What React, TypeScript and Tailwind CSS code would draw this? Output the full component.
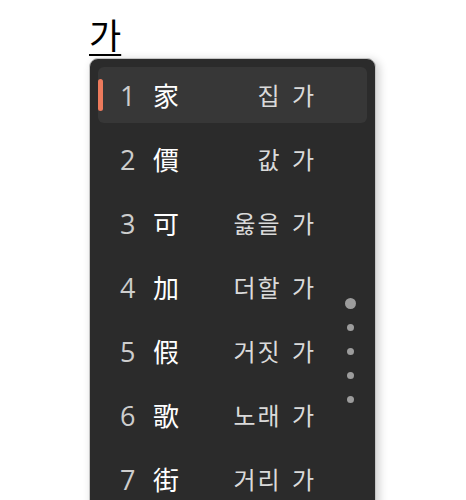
const rows = [
  { n: 1, hanja: "家", meaning: "집 가" },
  { n: 2, hanja: "價", meaning: "값 가" },
  { n: 3, hanja: "可", meaning: "옳을 가" },
  { n: 4, hanja: "加", meaning: "더할 가" },
  { n: 5, hanja: "假", meaning: "거짓 가" },
  { n: 6, hanja: "歌", meaning: "노래 가" },
  { n: 7, hanja: "街", meaning: "거리 가" },
];

const font = { fontFamily: '"Noto Sans CJK KR", "Noto Sans", sans-serif' };

export default function App() {
  return (
    <div className="h-[500px] w-[466px] overflow-hidden bg-white pl-[89px]" style={font}>
      <div className="pt-[14px] text-[35px] leading-[40px] text-black underline underline-offset-[5px] decoration-[2px]">
        가
      </div>
      <div className="relative mt-[4px] w-[287px] rounded-[9px] border border-[#c4c4c4] bg-[#2b2b2b] p-2 shadow-[3px_2px_10px_rgba(0,0,0,0.2)]">
        <div className="flex flex-col gap-2">
          {rows.map((r, i) => (
            <div
              key={r.n}
              className={`relative flex h-14 items-center rounded-[6px] pl-[22px] pr-[51px] ${
                i === 0 ? "bg-[#373737]" : ""
              }`}
            >
              {i === 0 && (
                <span className="absolute left-0 top-[12px] h-[32px] w-[5px] rounded-full bg-[#ec7a5c]" />
              )}
              <span
                className="w-[33px] text-[27px] leading-none text-[#cdcdcd]"
                style={{ fontFamily: '"Open Sans", "Noto Sans", sans-serif' }}
              >
                {r.n}
              </span>
              <span className="text-[26px] leading-none text-white">{r.hanja}</span>
              <span className="flex-1 text-right text-[24px] leading-none tracking-[2px] [word-spacing:3px] text-[#dadada]">
                {r.meaning}
              </span>
            </div>
          ))}
        </div>
        <div className="absolute left-[255px] top-[239px] flex w-[10px] flex-col items-center gap-[17px]">
          <span className="-mb-[2px] h-[11px] w-[11px] rounded-full bg-[#9c9c9c]" />
          <span className="h-[7px] w-[7px] rounded-full bg-[#9c9c9c]" />
          <span className="h-[7px] w-[7px] rounded-full bg-[#9c9c9c]" />
          <span className="h-[7px] w-[7px] rounded-full bg-[#9c9c9c]" />
          <span className="h-[7px] w-[7px] rounded-full bg-[#9c9c9c]" />
        </div>
      </div>
    </div>
  );
}
